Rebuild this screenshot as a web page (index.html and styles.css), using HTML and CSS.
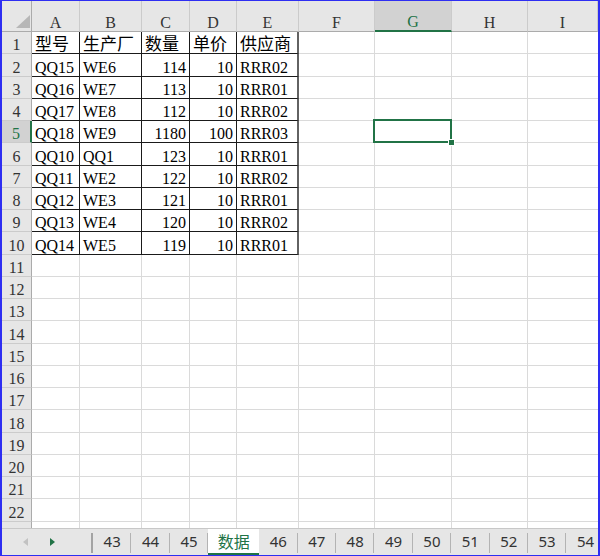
FILE: index.html
```html
<!DOCTYPE html>
<html lang="zh-CN">
<head>
    <meta charset="UTF-8">
    <meta name="viewport" content="width=device-width, initial-scale=1.0">
    <title>数据 - 工作表</title>
    <link rel="stylesheet" href="styles.css">
</head>
<body>
    <div class="window">
        <div class="sheet">
            <div class="grid" id="grid"></div>
        </div>

        <div class="tabbar">
            <div class="nav">
                <span class="arrow-left"></span>
                <span class="arrow-right"></span>
            </div>
            <div class="nav-sep"></div>
            <div class="tabs">
                <div class="tab">43</div>
                <div class="tab">44</div>
                <div class="tab">45</div>
                <div class="tab active">数据</div>
                <div class="tab">46</div>
                <div class="tab">47</div>
                <div class="tab">48</div>
                <div class="tab">49</div>
                <div class="tab">50</div>
                <div class="tab">51</div>
                <div class="tab">52</div>
                <div class="tab">53</div>
                <div class="tab">54</div>
            </div>
        </div>
    </div>

    <script>
        var columns = ['A', 'B', 'C', 'D', 'E', 'F', 'G', 'H', 'I'];
        var data = [
            ['型号', '生产厂', '数量', '单价', '供应商'],
            ['QQ15', 'WE6', 114, 10, 'RRR02'],
            ['QQ16', 'WE7', 113, 10, 'RRR01'],
            ['QQ17', 'WE8', 112, 10, 'RRR02'],
            ['QQ18', 'WE9', 1180, 100, 'RRR03'],
            ['QQ10', 'QQ1', 123, 10, 'RRR01'],
            ['QQ11', 'WE2', 122, 10, 'RRR02'],
            ['QQ12', 'WE3', 121, 10, 'RRR01'],
            ['QQ13', 'WE4', 120, 10, 'RRR02'],
            ['QQ14', 'WE5', 119, 10, 'RRR01']
        ];
        // active cell is G5
        var activeCol = 6, activeRow = 5;
        var visibleRows = 22;

        function addCell(grid, className, text) {
            var div = document.createElement('div');
            div.className = 'cell ' + className;
            if (text !== undefined) div.textContent = text;
            grid.appendChild(div);
            return div;
        }

        var grid = document.getElementById('grid');

        // header row
        var corner = addCell(grid, 'corner');
        corner.innerHTML = '<span class="corner-mark"></span>';
        columns.forEach(function (name, c) {
            addCell(grid, 'col-head' + (c === activeCol ? ' current' : ''), name);
        });

        // one extra row peeks out above the tab bar, without its number
        for (var r = 1; r <= visibleRows + 1; r++) {
            addCell(grid, 'row-head' + (r === activeRow ? ' current' : ''), r <= visibleRows ? r : undefined);
            var values = data[r - 1] || [];
            for (var c = 0; c < columns.length; c++) {
                var value = values[c];
                var cls = [];
                if (r <= data.length && c < 5) cls.push(c === 4 ? 'boxed boxed-end' : 'boxed');
                if (typeof value === 'number') cls.push('num');
                if (r === 1 && c < 5) cls.push('cjk');
                if (r === activeRow && c === activeCol) cls.push('selected');
                if (c === columns.length - 1) cls.push('last');
                addCell(grid, cls.join(' '), value);
            }
        }
    </script>
</body>
</html>
```

FILE: styles.css
```css
body {
    margin: 0;
    padding: 0;
    background-color: #fff;
}
.window {
    width: 600px;
    height: 556px;
    box-sizing: border-box;
    border: solid #2e2ef2;
    border-width: 1px 2px 1px 2px;
    display: flex;
    flex-direction: column;
    overflow: hidden;
    background-color: #fff;
}
.sheet {
    flex: 0 0 527px;
    overflow: hidden;
}
.grid {
    display: grid;
    grid-template-columns: 30px 48px 62px 48px 47px 62px 76px 77px 76px 1fr;
    grid-template-rows: 31px;
    grid-auto-rows: 22.25px;
}
.cell {
    box-sizing: border-box;
    display: flex;
    align-items: flex-end;
    padding: 0 3px;
    border-right: 1px solid #dadada;
    border-bottom: 1px solid #dadada;
    font: 16px/16px "Liberation Serif", "Noto Sans CJK SC", serif;
    color: #000;
    white-space: nowrap;
    overflow: hidden;
}
.cell.last {
    border-right: none;
}
.cell.num {
    justify-content: flex-end;
}
.cell.cjk {
    font-size: 17px;
}

/* the A1:E10 block has its own borders */
.cell.boxed {
    border-right-color: #1a1a1a;
    border-bottom-color: #1a1a1a;
}
.cell.boxed-end {
    border-right: 2px solid #626262;
}

/* headers */
.corner {
    background-color: #e6e6e6;
    border-right: 1px solid #ababab;
    border-bottom: 1px solid #ababab;
    justify-content: flex-end;
    padding: 0 1px 3px 0;
}
.corner-mark {
    width: 0;
    height: 0;
    border-left: 14px solid transparent;
    border-bottom: 13px solid #b7b7b7;
}
.col-head {
    background-color: #e6e6e6;
    border-right-color: #cbcbcb;
    border-bottom-color: #ababab;
    justify-content: center;
    color: #333;
}
.row-head {
    background-color: #e6e6e6;
    border-right-color: #ababab;
    border-bottom-color: #cbcbcb;
    justify-content: center;
    color: #333;
}
.col-head.current {
    background-color: #d2d2d2;
    color: #217346;
    border-bottom: 2px solid #217346;
}
.row-head.current {
    background-color: #d2d2d2;
    color: #217346;
    border-right: 2px solid #217346;
}

/* active cell frame with the fill handle */
.cell.selected {
    position: relative;
    overflow: visible;
}
.cell.selected::after {
    content: '';
    position: absolute;
    left: -2px;
    top: -2px;
    right: -1px;
    bottom: -1px;
    border: 2px solid #217346;
    z-index: 2;
}
.cell.selected::before {
    content: '';
    position: absolute;
    right: -4px;
    bottom: -4px;
    width: 5px;
    height: 5px;
    background-color: #217346;
    border: 1px solid #fff;
    z-index: 3;
}

/* sheet tabs */
.tabbar {
    flex: 1;
    display: flex;
    background-color: #e6e6e6;
    border-top: 1px solid #c8c8c8;
    overflow: hidden;
}
.nav {
    flex: 0 0 89px;
    display: flex;
    align-items: center;
    gap: 22px;
    padding-left: 21px;
    box-sizing: border-box;
}
.arrow-left {
    width: 0;
    height: 0;
    border-top: 4px solid transparent;
    border-bottom: 4px solid transparent;
    border-right: 5px solid #c2c2c2;
}
.arrow-right {
    width: 0;
    height: 0;
    border-top: 4px solid transparent;
    border-bottom: 4px solid transparent;
    border-left: 5px solid #217346;
}
.nav-sep {
    flex: 0 0 2px;
    height: 20px;
    align-self: center;
    margin-top: 2px;
    background-color: #a3a3a3;
}
.tabs {
    display: flex;
}
.tab {
    flex: 0 0 38.4px;
    box-sizing: border-box;
    display: flex;
    align-items: center;
    justify-content: center;
    padding-bottom: 2px;
    font: 15px "Noto Sans", sans-serif;
    color: #333;
    background-image: linear-gradient(#b3b3b3, #b3b3b3);
    background-size: 1px 20px;
    background-position: right 4px;
    background-repeat: no-repeat;
}
.tab.active {
    flex-basis: 51px;
    background: #fff;
    color: #217346;
    font-family: "Noto Sans CJK SC", sans-serif;
    font-size: 16px;
    border-bottom: 2px solid #217346;
    padding-bottom: 0;
}
```
